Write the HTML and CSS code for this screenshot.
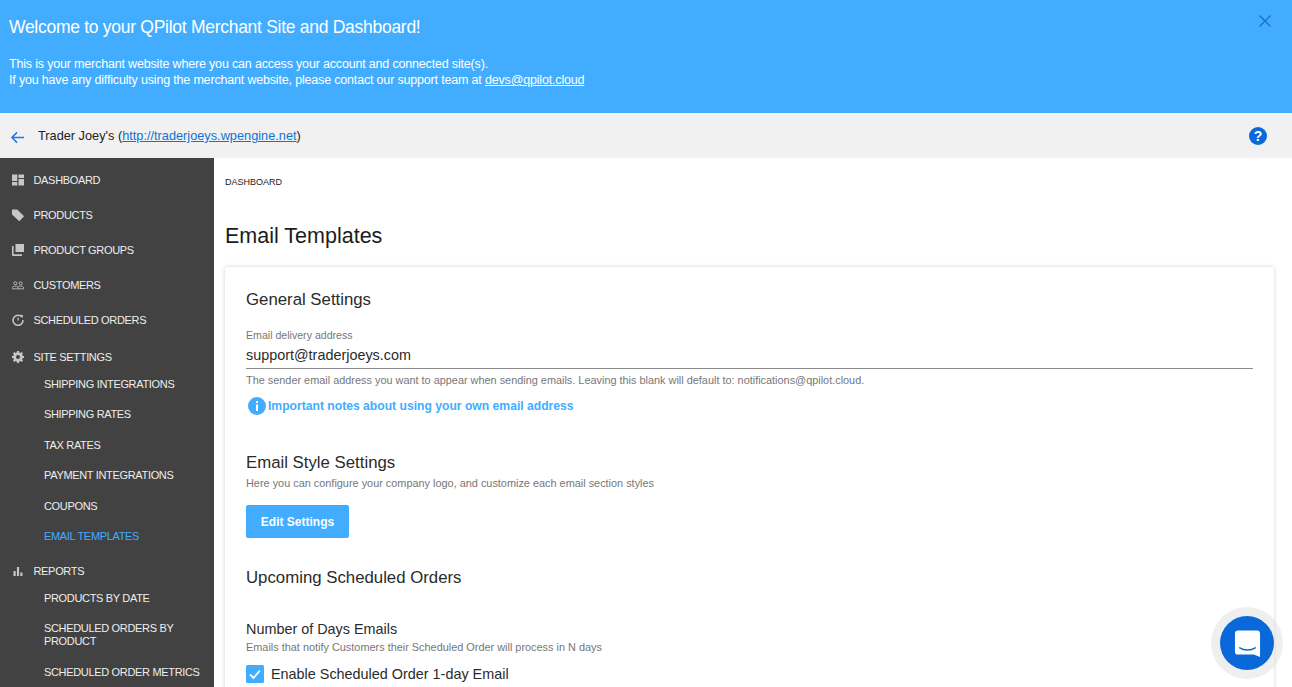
FILE: index.html
```html
<!DOCTYPE html>
<html lang="en">
<head>
<meta charset="utf-8">
<title>Email Templates</title>
<link rel="stylesheet" href="styles.css">
</head>
<body>
<div class="page">
  <header class="banner">
    <div class="banner-text">
      <h2>Welcome to your QPilot Merchant Site and Dashboard!</h2>
      <p>This is your merchant website where you can access your account and connected site(s).<br>If you have any difficulty using the merchant website, please contact our support team at <a href="#">devs@qpilot.cloud</a></p>
    </div>
    <svg class="close" viewBox="0 0 14 14"><path d="M1.5 1.5l11 11M12.5 1.5l-11 11"/></svg>
  </header>
  <div class="sitebar">
    <svg class="back" viewBox="0 0 16 14"><path d="M15 7H2M7.5 1.5L2 7l5.5 5.5"/></svg>
    <span class="site">Trader Joey's (<a href="#">http://traderjoeys.wpengine.net</a>)</span>
    <svg class="help" viewBox="0 0 18 18"><circle cx="9" cy="9" r="9"/><text x="9" y="14" text-anchor="middle">?</text></svg>
  </div>
  <div class="body">
    <nav class="side">
      <a class="top"><svg viewBox="0 0 12 12"><path d="M0 .5h5.300v6.500H0zM0 8h5.300v3.500H0zM6.500.5H12V4H6.500zM6.500 5H12v6.500H6.500z"/></svg>DASHBOARD</a>
      <a class="top"><svg viewBox="0 0 12 12"><path d="M0 1.500A.8.8 0 0 1 .8.5h4.400l6.400 6.200a.8.8 0 0 1 0 1.100l-3.800 3.900a.8.8 0 0 1-1.100 0L0 5.400z"/></svg>PRODUCTS</a>
      <a class="top"><svg viewBox="0 0 12 12"><path fill-rule="evenodd" d="M3.500 0H12v8H3.500zM0 2h1.600v8.200H10V12H1a1 1 0 0 1-1-1z"/></svg>PRODUCT GROUPS</a>
      <a class="top"><svg viewBox="0 0 14 12"><path class="line" d="M.5 10.500V9.200c0-1.200 2-1.900 2.900-1.900h1c1 0 2.600.7 2.600 1.900v1.300zM7 10.500h6.500V9.200c0-1.200-1.900-1.900-2.900-1.900h-1C8.700 7.300 7.600 7.800 7.200 8.500"/><circle class="line" cx="3.900" cy="4" r="1.800"/><circle class="line" cx="10.100" cy="4" r="1.800"/></svg>CUSTOMERS</a>
      <a class="top"><svg viewBox="0 0 12 12"><path class="line wide" d="M9.600 2.800A5 5 0 1 0 11 6"/><path d="M8 .8l3 .2-.4 3.200zM5.500 3.500h1.200v3H5.500z"/></svg>SCHEDULED ORDERS</a>
      <a class="top group settings"><svg viewBox="0 0 12 12"><path fill-rule="evenodd" d="M5 0h2l.3 1.600 1 .4L9.700 1l1.300 1.400-.9 1.300.4 1L12 5v2l-1.500.3-.4 1 .9 1.300L9.700 11l-1.400-1-1 .4L7 12H5l-.3-1.600-1-.4-1.400 1L1 9.600l.9-1.300-.4-1L0 7V5l1.500-.3.4-1L1 2.400 2.300 1l1.400 1 1-.4zM6 4a2 2 0 1 0 0 4 2 2 0 0 0 0-4z"/></svg>SITE SETTINGS</a>
      <a class="sub">SHIPPING INTEGRATIONS</a>
      <a class="sub">SHIPPING RATES</a>
      <a class="sub">TAX RATES</a>
      <a class="sub">PAYMENT INTEGRATIONS</a>
      <a class="sub">COUPONS</a>
      <a class="sub active">EMAIL TEMPLATES</a>
      <a class="top group"><svg viewBox="0 0 12 12"><path d="M1.500 6h2.200v5H1.500zM4.900 2h2.200v9H4.900zM8.300 7.500h2.200V11H8.300z"/></svg>REPORTS</a>
      <a class="sub">PRODUCTS BY DATE</a>
      <a class="sub two">SCHEDULED ORDERS BY PRODUCT</a>
      <a class="sub">SCHEDULED ORDER METRICS</a>
    </nav>
    <main class="main">
      <div class="crumb">DASHBOARD</div>
      <h1>Email Templates</h1>
      <section class="card">
        <h3>General Settings</h3>
        <label class="field-label">Email delivery address</label>
        <div class="field-value">support@traderjoeys.com</div>
        <p class="hint hint-field">The sender email address you want to appear when sending emails. Leaving this blank will default to: notifications@qpilot.cloud.</p>
        <a class="note"><svg viewBox="0 0 18 18"><circle cx="9" cy="9" r="9"/><path class="i" d="M8 4h2v2H8zM8 7.500h2V14H8z"/></svg>Important notes about using your own email address</a>
        <h3 class="style-head">Email Style Settings</h3>
        <p class="hint style-hint">Here you can configure your company logo, and customize each email section styles</p>
        <button class="edit">Edit Settings</button>
        <h3 class="upcoming">Upcoming Scheduled Orders</h3>
        <h4>Number of Days Emails</h4>
        <p class="hint days-hint">Emails that notify Customers their Scheduled Order will process in N days</p>
        <div class="check"><svg viewBox="0 0 18 18"><rect width="18" height="18" rx="1.500"/><path d="M4 9.500l3.500 3.500L14 5.500"/></svg>Enable Scheduled Order 1-day Email</div>
      </section>
    </main>
  </div>
  <div class="launcher"><svg viewBox="0 0 28 30"><path class="bubble" d="M4 1h20a3 3 0 0 1 3 3v24.500l-6.500-2.500H4a3 3 0 0 1-3-3V4a3 3 0 0 1 3-3z"/><path class="smile" d="M6 19c4.500 3 11.500 3 16 0"/></svg></div>
</div>
</body>
</html>
```
FILE: styles.css
```css
* { box-sizing: border-box; }
html, body { margin: 0; height: 100%; overflow: hidden; }
body { font-family: "Liberation Sans", Arial, sans-serif; color: #212121; background: #fff; }
a { cursor: pointer; }
.page { position: relative; height: 687px; overflow: hidden; display: flex; flex-direction: column; }

.banner { height: 113px; flex: none; background: #42adff; color: #fff; display: flex; justify-content: space-between; padding: 17px 20px 0 9px; }
.banner h2 { margin: 0; font-size: 17.500px; line-height: 20px; font-weight: 400; letter-spacing: -.28px; }
.banner p { margin: 19px 0 0; font-size: 12.500px; line-height: 16px; letter-spacing: -.175px; }
.banner a { color: #fff; text-decoration: underline; }
.close { width: 14px; height: 14px; margin-top: -3px; fill: none; stroke: #1a6fd6; stroke-width: 1.400; }

.sitebar { height: 45px; flex: none; background: #f1f1f1; display: flex; align-items: center; padding: 0 25px 0 10px; font-size: 12.750px; color: #212121; }
.back { width: 15px; height: 13px; margin-top: 3px; fill: none; stroke: #1a7be0; stroke-width: 1.600; }
.site { margin-left: 13px; flex: 1; }
.site a { color: #1072d9; text-decoration: underline; }
.help { width: 18px; height: 18px; }
.help circle { fill: #0a68d8; }
.help text { fill: #fff; font: 700 14px "Liberation Sans", sans-serif; }

.body { flex: 1; display: flex; min-height: 0; }
.side { width: 214px; flex: none; background: #424242; padding-top: 4px; color: #eee; font-size: 11px; letter-spacing: -.33px; overflow: hidden; }
.side a { display: block; }
.side .top { display: flex; align-items: center; height: 35px; padding-left: 11.500px; }
.top svg { width: 12px; height: 12px; margin-right: 10px; flex: none; fill: #c6c6c6; }
.top .line { fill: none; stroke: #c6c6c6; stroke-width: 1; }
.top .wide { stroke-width: 1.500; }
.side .group { height: 38px; margin-bottom: -7.250px; }
.side .settings { margin-top: 1px; }
.sub { height: 30.500px; line-height: 30.500px; padding-left: 44px; padding-right: 10px; }
.sub.two { height: 43.500px; line-height: 13px; padding-top: 8.500px; padding-right: 14px; }
.sub.active { color: #42adff; }

.main { flex: 1; min-width: 0; padding: 19px 18px 0 11px; }
.crumb { font-size: 9px; line-height: 10px; color: #212121; }
h1 { margin: 34px 0 0; font-size: 21.500px; line-height: 30px; font-weight: 400; color: #1c1c1c; }
.card { margin-top: 16px; padding: 23px 21px 0; height: 480px; border-radius: 2px; background: #fff; box-shadow: 0 0 4px rgba(0,0,0,.18); }
h3 { margin: 0; font-size: 16.800px; line-height: 20px; font-weight: 400; color: #2b2b2b; }
h4 { margin: 32px 0 0; font-size: 14.400px; line-height: 18px; font-weight: 400; color: #2b2b2b; }
.field-label { display: block; margin-top: 19px; font-size: 10.600px; line-height: 12px; color: #777; }
.field-value { height: 28px; padding-top: 5px; font-size: 14.400px; line-height: 18px; color: #2b2b2b; border-bottom: 1px solid #8a8a8a; }
.hint { margin: 0; font-size: 10.900px; line-height: 13px; color: #777; }
.hint-field { margin-top: 5px; }
.note { display: flex; align-items: center; margin-top: 10px; margin-left: 2px; font-size: 12.150px; font-weight: 700; line-height: 18px; color: #42adff; }
.note svg { width: 18px; height: 18px; margin-right: 2px; flex: none; }
.note circle { fill: #42adff; }
.note .i { fill: #fff; }
.style-head { margin-top: 38px; }
.style-hint { margin-top: 4px; }
.edit { display: block; margin-top: 15px; width: 103px; height: 33px; border: 0; border-radius: 2px; background: #42adff; color: #fff; font: 700 12px "Liberation Sans", sans-serif; }
.upcoming { margin-top: 30px; }
.days-hint { margin-top: 3px; }
.check { display: flex; align-items: center; margin-top: 11px; font-size: 14.400px; color: #2b2b2b; }
.check svg { width: 18px; height: 18px; margin-right: 7px; flex: none; }
.check rect { fill: #42adff; }
.check path { fill: none; stroke: #fff; stroke-width: 1.800; }

.launcher { position: absolute; left: 1220px; top: 616px; width: 54px; height: 54px; border-radius: 50%; background: #0a68d8; box-shadow: 0 0 0 9px rgba(225,225,225,.55); display: flex; align-items: center; justify-content: center; }
.launcher svg { width: 27px; height: 30px; margin-top: 2px; }
.bubble { fill: #fff; }
.smile { fill: none; stroke: #0a68d8; stroke-width: 1.500; stroke-linecap: round; }
```
